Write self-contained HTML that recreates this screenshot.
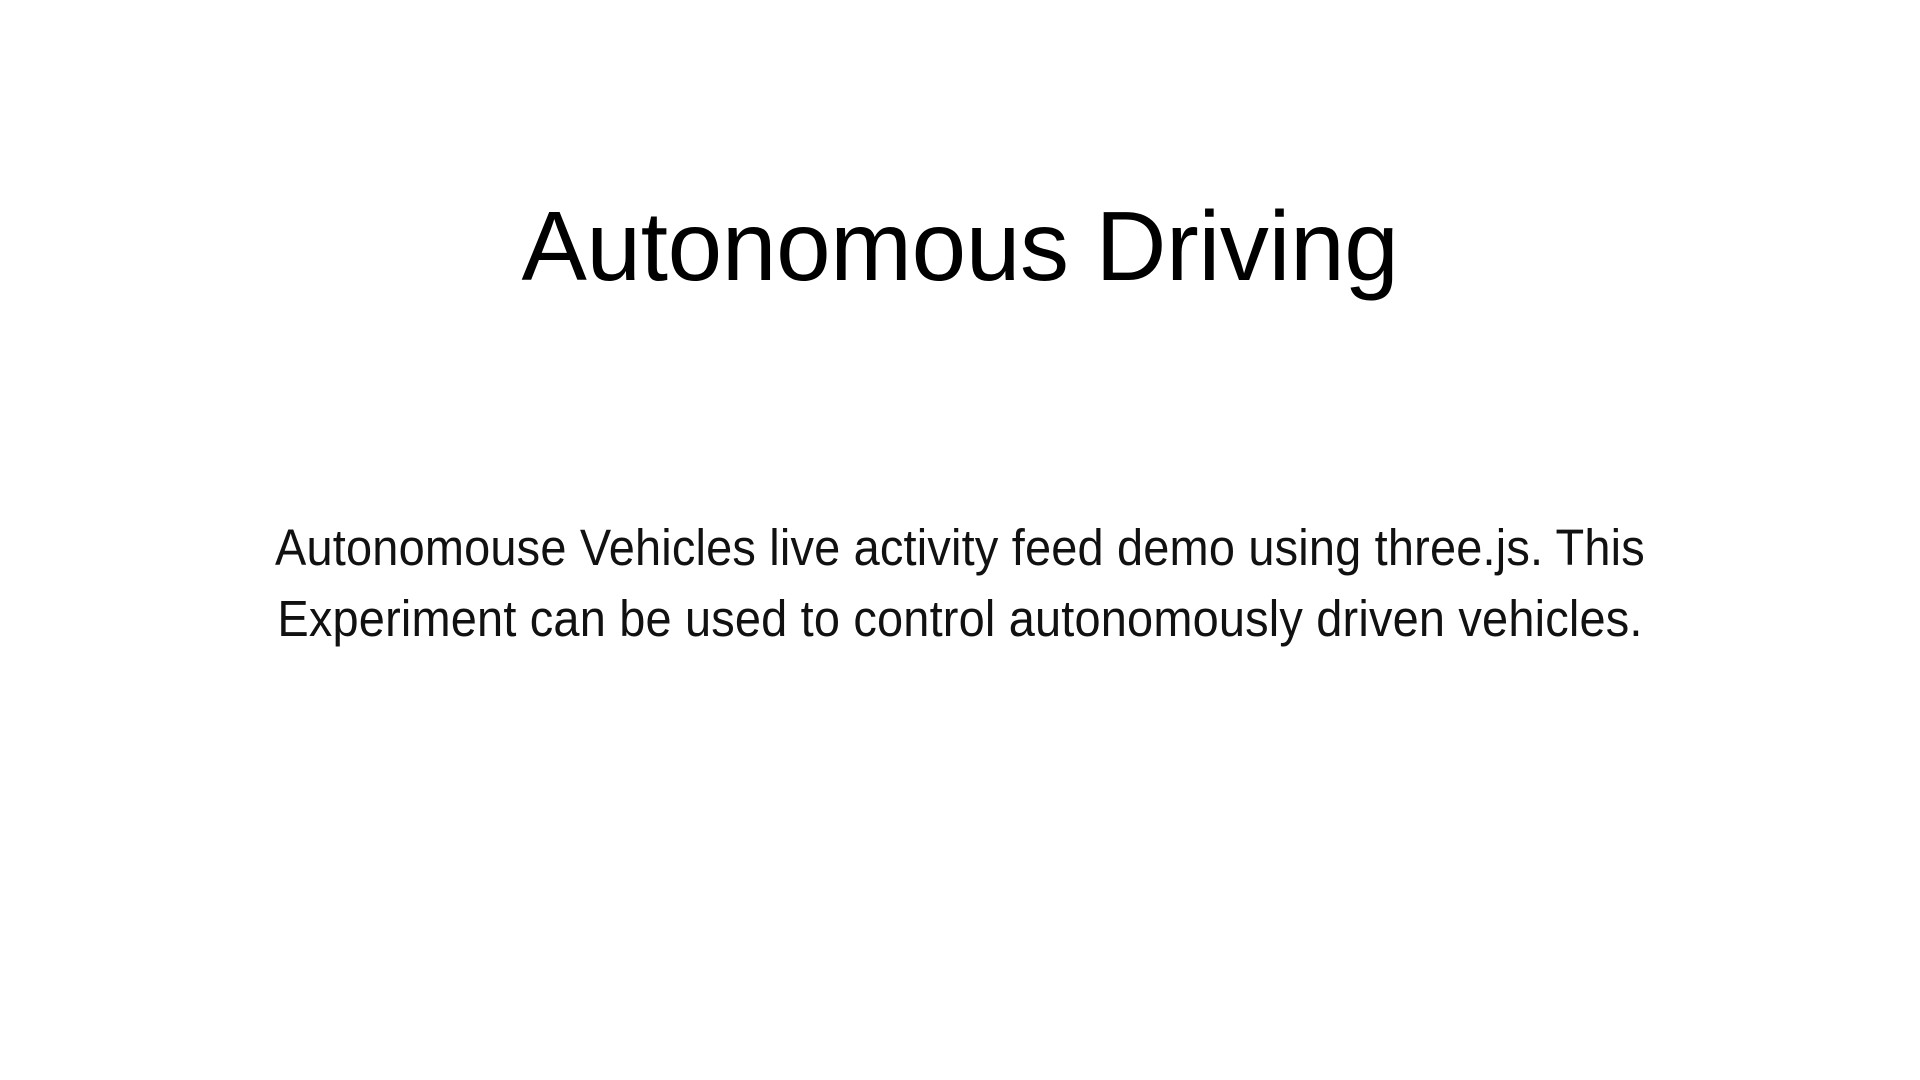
<!DOCTYPE html>
<html><head><meta charset="utf-8"><style>
html,body{margin:0;padding:0;background:#fff;width:1920px;height:1080px;overflow:hidden;color:#000}
h1{position:absolute;top:181px;left:0;width:1920px;text-align:center;margin:0;font:400 98px/130px "Liberation Sans",sans-serif;letter-spacing:-0.3px}
p{position:absolute;top:512px;left:0;width:1920px;text-align:center;margin:0;font:400 51px/71px "Liberation Sans",sans-serif;letter-spacing:0.2px;transform:scaleX(0.92);transform-origin:960px 0;color:#111}
</style></head><body>
<h1>Autonomous Driving</h1>
<p>Autonomouse Vehicles live activity feed demo using three.js. This<br>Experiment can be used to control autonomously driven vehicles.</p>
</body></html>
